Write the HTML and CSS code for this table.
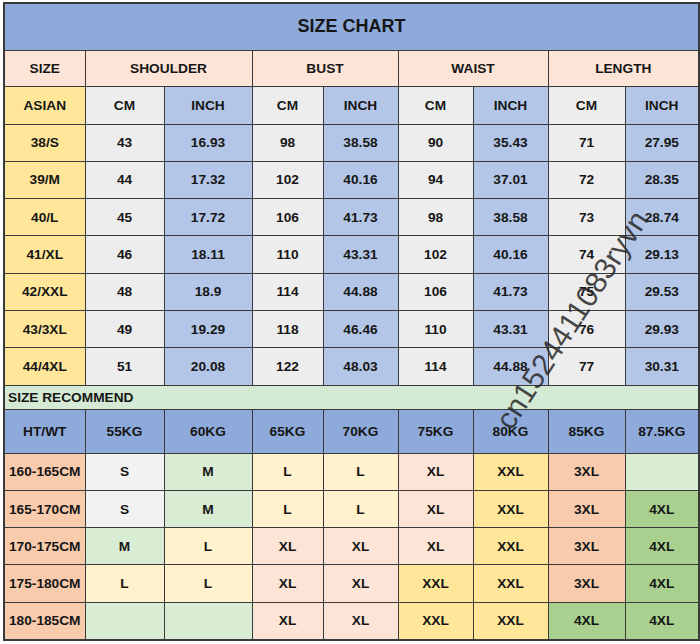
FILE: index.html
```html
<!DOCTYPE html>
<html>
<head>
<meta charset="utf-8">
<link rel="stylesheet" href="styles.css">
</head>
<body>
<div class="sheet">
<table class="chart">
<colgroup>
<col class="c0"><col class="c1"><col class="c2"><col class="c3"><col class="c4"><col class="c5"><col class="c6"><col class="c7"><col class="c8">
</colgroup>
<tr class="r-title"><td colspan="9" class="title">SIZE CHART</td></tr>
<tr class="r-head">
<td class="peach">SIZE</td>
<td colspan="2" class="peach">SHOULDER</td>
<td colspan="2" class="peach">BUST</td>
<td colspan="2" class="peach">WAIST</td>
<td colspan="2" class="peach">LENGTH</td>
</tr>
<tr class="r-unit">
<td class="yel">ASIAN</td>
<td class="gray">CM</td><td class="lblue">INCH</td>
<td class="gray">CM</td><td class="lblue">INCH</td>
<td class="gray">CM</td><td class="lblue">INCH</td>
<td class="gray">CM</td><td class="lblue">INCH</td>
</tr>
<tr class="r-data"><td class="yel">38/S</td><td class="gray">43</td><td class="lblue">16.93</td><td class="gray">98</td><td class="lblue">38.58</td><td class="gray">90</td><td class="lblue">35.43</td><td class="gray">71</td><td class="lblue">27.95</td></tr>
<tr class="r-data"><td class="yel">39/M</td><td class="gray">44</td><td class="lblue">17.32</td><td class="gray">102</td><td class="lblue">40.16</td><td class="gray">94</td><td class="lblue">37.01</td><td class="gray">72</td><td class="lblue">28.35</td></tr>
<tr class="r-data"><td class="yel">40/L</td><td class="gray">45</td><td class="lblue">17.72</td><td class="gray">106</td><td class="lblue">41.73</td><td class="gray">98</td><td class="lblue">38.58</td><td class="gray">73</td><td class="lblue">28.74</td></tr>
<tr class="r-data"><td class="yel">41/XL</td><td class="gray">46</td><td class="lblue">18.11</td><td class="gray">110</td><td class="lblue">43.31</td><td class="gray">102</td><td class="lblue">40.16</td><td class="gray">74</td><td class="lblue">29.13</td></tr>
<tr class="r-data"><td class="yel">42/XXL</td><td class="gray">48</td><td class="lblue">18.9</td><td class="gray">114</td><td class="lblue">44.88</td><td class="gray">106</td><td class="lblue">41.73</td><td class="gray">75</td><td class="lblue">29.53</td></tr>
<tr class="r-data"><td class="yel">43/3XL</td><td class="gray">49</td><td class="lblue">19.29</td><td class="gray">118</td><td class="lblue">46.46</td><td class="gray">110</td><td class="lblue">43.31</td><td class="gray">76</td><td class="lblue">29.93</td></tr>
<tr class="r-data"><td class="yel">44/4XL</td><td class="gray">51</td><td class="lblue">20.08</td><td class="gray">122</td><td class="lblue">48.03</td><td class="gray">114</td><td class="lblue">44.88</td><td class="gray">77</td><td class="lblue">30.31</td></tr>
<tr class="r-rec"><td colspan="9" class="rec">SIZE RECOMMEND</td></tr>
<tr class="r-kg">
<td class="blue">HT/WT</td><td class="blue">55KG</td><td class="blue">60KG</td><td class="blue">65KG</td><td class="blue">70KG</td><td class="blue">75KG</td><td class="blue">80KG</td><td class="blue">85KG</td><td class="blue">87.5KG</td>
</tr>
<tr class="r-data"><td class="orange">160-165CM</td><td class="lgray">S</td><td class="lgreen">M</td><td class="lyel">L</td><td class="lyel">L</td><td class="peach">XL</td><td class="yel">XXL</td><td class="orange">3XL</td><td class="lgreen"></td></tr>
<tr class="r-data"><td class="orange">165-170CM</td><td class="lgray">S</td><td class="lgreen">M</td><td class="lyel">L</td><td class="lyel">L</td><td class="peach">XL</td><td class="yel">XXL</td><td class="orange">3XL</td><td class="green">4XL</td></tr>
<tr class="r-data"><td class="orange">170-175CM</td><td class="lgreen">M</td><td class="lyel">L</td><td class="peach">XL</td><td class="peach">XL</td><td class="peach">XL</td><td class="yel">XXL</td><td class="orange">3XL</td><td class="green">4XL</td></tr>
<tr class="r-data"><td class="orange">175-180CM</td><td class="lyel">L</td><td class="lyel">L</td><td class="peach">XL</td><td class="peach">XL</td><td class="yel">XXL</td><td class="yel">XXL</td><td class="orange">3XL</td><td class="green">4XL</td></tr>
<tr class="r-data"><td class="orange">180-185CM</td><td class="lgreen"></td><td class="lgreen"></td><td class="peach">XL</td><td class="peach">XL</td><td class="yel">XXL</td><td class="yel">XXL</td><td class="green">4XL</td><td class="green">4XL</td></tr>
</table>
<div class="watermark">cn1524411083ryvn</div>
</div>
</body>
</html>
```
FILE: styles.css
```css
html, body {
  margin: 0;
  padding: 0;
  background: #ffffff;
}
.sheet {
  position: relative;
  padding: 2px 0 0 3px;
  width: 696px;
}
.chart {
  border-collapse: collapse;
  table-layout: fixed;
  width: 696px;
  font-family: "Liberation Sans", Arial, sans-serif;
  font-weight: bold;
  font-size: 13.7px;
  color: #161616;
  border: 2px solid #3a3a3a;
}
.chart td {
  border: 1px solid #3a3a3a;
  text-align: center;
  vertical-align: middle;
  padding: 0;
}
.c0 { width: 81px; }
.c1 { width: 79px; }
.c2 { width: 88px; }
.c3 { width: 71px; }
.c4 { width: 75px; }
.c5 { width: 75px; }
.c6 { width: 75px; }
.c7 { width: 77px; }
.c8 { width: 74px; }
.r-title { height: 47px; }
.r-head { height: 36px; }
.r-unit { height: 38px; }
.r-data { height: 37.3px; }
.r-rec { height: 24px; }
.r-kg { height: 44px; }
.title {
  background: #8eaadb;
  font-size: 18px;
}
.rec {
  background: #d5ead4;
  text-align: left !important;
  padding-left: 3px !important;
}
.peach { background: #fce4d6; }
.yel { background: #ffe699; }
.gray { background: #ededed; }
.lgray { background: #f2f2f2; }
.lblue { background: #b4c6e7; }
.blue { background: #8eaadb; }
.orange { background: #f8cbad; }
.lgreen { background: #d9ecd4; }
.lyel { background: #fff2cc; }
.green { background: #a9d08e; }
.watermark {
  position: absolute;
  left: 422px;
  top: 303px;
  width: 300px;
  text-align: center;
  font-family: "Liberation Sans", Arial, sans-serif;
  font-size: 30px;
  color: rgba(40, 40, 40, 0.85);
  transform: rotate(-57deg);
  transform-origin: center center;
  white-space: nowrap;
  pointer-events: none;
}
```
